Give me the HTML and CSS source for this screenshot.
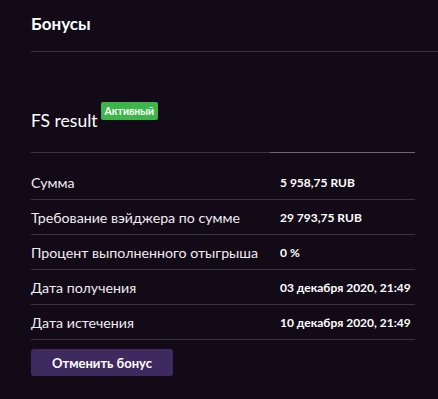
FILE: index.html
```html
<!DOCTYPE html>
<html lang="ru">
<head>
  <meta charset="UTF-8" />
  <title>Бонусы</title>
  <meta name="viewport" content="width=device-width, initial-scale=1.0"/>
  <link rel="stylesheet" href="styles.css">
</head>
<body>
  <div class="page-head">
    <h1>Бонусы</h1>
  </div>

  <div class="bonus">
    <div class="bonus-title">
      <span class="bonus-name">FS result</span>
      <span class="badge">Активный</span>
    </div>
    <div class="bonus-line"><span class="bonus-line-active"></span></div>

    <table class="bonus-table">
      <tr><td>Сумма</td><td class="val">5 958,75 RUB</td></tr>
      <tr><td>Требование вэйджера по сумме</td><td class="val">29 793,75 RUB</td></tr>
      <tr><td>Процент выполненного отыгрыша</td><td class="val">0 %</td></tr>
      <tr><td>Дата получения</td><td class="val">03 декабря 2020, 21:49</td></tr>
      <tr><td>Дата истечения</td><td class="val">10 декабря 2020, 21:49</td></tr>
    </table>

    <button class="btn-cancel">Отменить бонус</button>
  </div>
</body>
</html>
```

FILE: styles.css
```css
body { margin: 0; background: #120a17; color: #efedf1; font-family: Lato, "Liberation Sans", sans-serif; }
.page-head { margin-left: 31px; border-bottom: 1px solid #3a3340; height: 52px; box-sizing: border-box; }
h1 { margin: 0; padding-top: 13px; font-size: 17px; font-weight: bold; color: #fff; line-height: 22px; }
.bonus { margin: 0 23px 0 31px; }
.bonus-title { padding-top: 49px; height: 51px; display: flex; align-items: flex-start; }
.bonus-name { font-size: 17.5px; line-height: 22px; margin-top: 9px; color: #fff; }
.badge { margin: 1px 0 0 3px; background: #3eb54b; color: #fff; font-size: 10.5px; font-weight: bold; padding: 2px 4px; line-height: 14px; border-radius: 2px; }
.bonus-line { height: 1px; background: #3a3340; display: flex; justify-content: flex-end; }
.bonus-line-active { width: 145px; background: #6e6775; }
.bonus-table { width: 100%; border-collapse: collapse; margin-top: 12px; font-size: 14.2px; }
.bonus-table td { height: 34px; border-bottom: 1px solid #3a3340; padding: 0; }
.bonus-table .val { width: 135px; font-weight: bold; font-size: 12px; color: #fff; white-space: nowrap; }
.btn-cancel { margin-top: 9px; width: 142px; height: 27px; background: #3e2a5e; color: #fff; border: none; border-radius: 3px; font-family: inherit; font-size: 13px; font-weight: bold; }
```
